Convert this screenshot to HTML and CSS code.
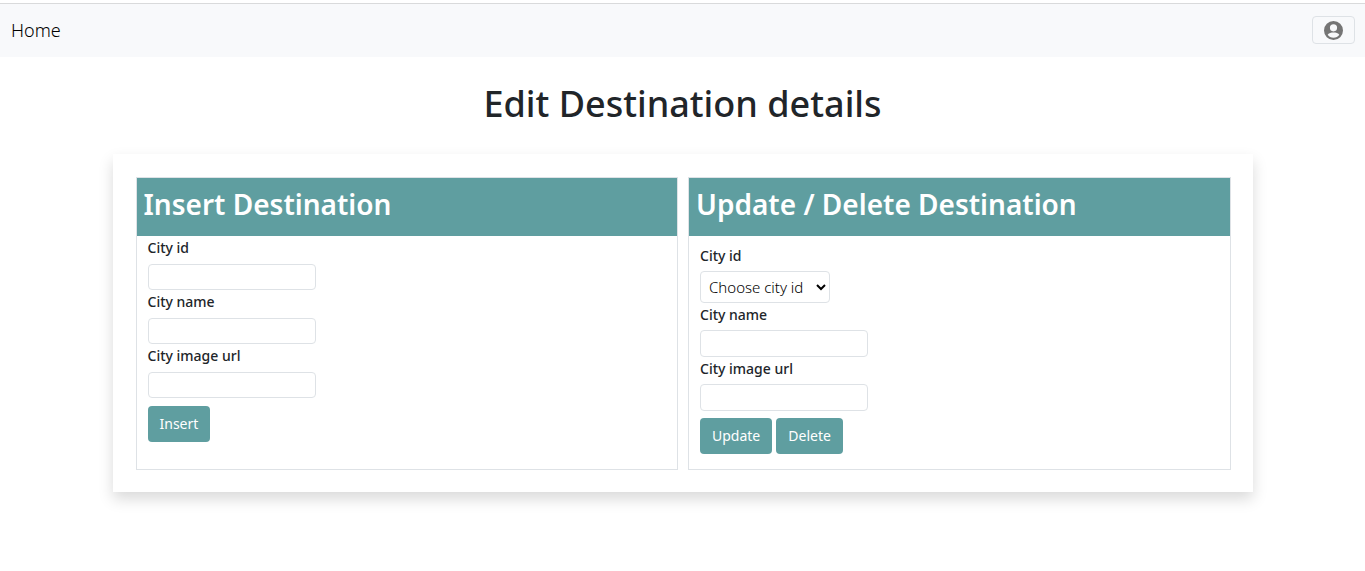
FILE: index.html
```html
<!DOCTYPE html>
<html lang="en">
<head>
<meta charset="utf-8">
<meta name="viewport" content="width=device-width, initial-scale=1">
<title>Edit Destination details</title>
<link rel="stylesheet" href="styles.css">
</head>
<body>
<nav class="navbar">
  <a class="brand" href="#">Home</a>
  <button class="account" type="button" aria-label="Account">
    <svg class="account-icon" viewBox="0 0 18 18" aria-hidden="true">
      <path fill="#757575" fill-rule="evenodd" d="M9 0a9 9 0 1 0 0 18A9 9 0 0 0 9 0zM9 3.100a3.400 3.400 0 1 1 0 6.800a3.400 3.400 0 0 1 0-6.800zM9 15.800c-2.300 0-4.300-1.100-5.500-2.800C4.100 11.500 7 10.900 9 10.900s4.900.6 5.500 2.100c-1.200 1.700-3.200 2.800-5.500 2.800z"/>
    </svg>
  </button>
</nav>
<main>
  <h1 class="title">Edit Destination details</h1>
  <div class="card">
    <section class="panel">
      <h2 class="panel-title">Insert Destination</h2>
      <form class="form">
        <label class="label" for="new-id">City id</label>
        <input class="input" id="new-id" type="text">
        <label class="label" for="new-name">City name</label>
        <input class="input" id="new-name" type="text">
        <label class="label" for="new-url">City image url</label>
        <input class="input" id="new-url" type="text">
        <div class="actions"><button class="btn" type="button">Insert</button></div>
      </form>
    </section>
    <section class="panel">
      <h2 class="panel-title">Update / Delete Destination</h2>
      <form class="form form-update">
        <label class="label" for="city-id">City id</label>
        <select class="select" id="city-id"><option>Choose city id</option></select>
        <label class="label" for="city-name">City name</label>
        <input class="input" id="city-name" type="text">
        <label class="label" for="city-url">City image url</label>
        <input class="input" id="city-url" type="text">
        <div class="actions"><button class="btn" type="button">Update</button><button class="btn" type="button">Delete</button></div>
      </form>
    </section>
  </div>
</main>
</body>
</html>
```
FILE: styles.css
```css
* { box-sizing: border-box; }
body {
  margin: 0;
  padding-top: 3px;
  background: #fff;
  color: #212529;
  font-family: "Segoe UI", "Noto Sans", sans-serif;
  font-size: 14px;
  line-height: 24px;
}
.navbar {
  display: flex;
  align-items: center;
  justify-content: space-between;
  padding: 12px 10px 13px 11px;
  border-top: 1px solid #d9dadb;
  background: #f8f9fb;
}
.brand {
  color: #000;
  font-size: 18px;
  font-weight: 300;
  line-height: 28px;
  text-decoration: none;
}
.account {
  display: flex;
  align-items: center;
  justify-content: center;
  width: 43px;
  height: 28px;
  padding: 0;
  border: 1px solid #dee2e6;
  border-radius: 4px;
  background: transparent;
}
.account-icon { width: 19px; height: 19px; }
.title {
  margin: 24px 0 27px;
  font-size: 36px;
  font-weight: 500;
  line-height: 46px;
  text-align: center;
}
.card {
  display: grid;
  grid-template-columns: 1fr 1fr;
  gap: 10px;
  width: calc(100% - 32px);
  max-width: 1140px;
  margin: 0 auto 48px;
  padding: 23px 22px 22px 23px;
  background: #fff;
  box-shadow: 0 7px 14px rgba(0, 0, 0, 0.15);
}
.panel { border: 1px solid #dee2e6; }
.panel-title {
  margin: 0;
  padding: 8px 7px 14px;
  background: #5f9ea0;
  color: #fff;
  font-size: 28px;
  font-weight: 600;
  line-height: 36px;
}
.form {
  display: flex;
  flex-direction: column;
  align-items: flex-start;
  padding: 0 11px 15px;
}
.label { margin-bottom: 4px; font-weight: 500; }
.input,
.select {
  border: 1px solid #dee2e6;
  border-radius: 4px;
  background: #fff;
  color: #000;
  font: inherit;
}
.input { width: 168px; height: 26px; padding: 1px 2px; }
.select {
  width: 130px;
  height: 32px;
  padding: 0 4px;
  font-size: 15px;
  font-weight: 300;
}
.actions { display: flex; gap: 4px; margin-top: 8px; }
.btn {
  padding: 6px 12px;
  border: 0;
  border-radius: 4px;
  background: #5f9ea0;
  color: #fff;
  font: inherit;
}
.form-update { padding-top: 8px; }
.form-update .label { margin-bottom: 3px; }
.form-update .input { height: 27px; }
.form-update .actions { margin-top: 7px; }
@media (max-width: 800px) {
  .card { grid-template-columns: 1fr; }
}
```
